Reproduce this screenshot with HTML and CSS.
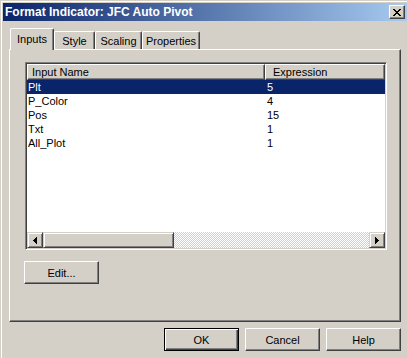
FILE: index.html
```html
<!DOCTYPE html>
<html lang="en">
  <head>
    <meta charset="UTF-8" />
    <meta name="viewport" content="width=device-width, initial-scale=1.0" />
    <title>Format Indicator: JFC Auto Pivot</title>
    <link rel="stylesheet" href="styles.css">
  </head>
  <body>
    <div class="window">
      <div class="titlebar">
        <span class="title">Format Indicator: JFC Auto Pivot</span>
        <div class="close-btn">
          <svg width="8" height="7" viewBox="0 0 8 7" shape-rendering="crispEdges">
            <path d="M0 0h2l2 2.5 2-2.5h2L5 3.5 8 7H6L4 4.5 2 7H0l3-3.5z" fill="#000" />
          </svg>
        </div>
      </div>
      <div class="content">
        <div class="tabs">
          <div class="tab active tab-inputs">Inputs</div>
          <div class="tab tab-style">Style</div>
          <div class="tab tab-scaling">Scaling</div>
          <div class="tab tab-properties">Properties</div>
        </div>
        <div class="panel">
          <div class="listbox">
            <div class="list-header">
              <div class="col col-name">Input Name</div>
              <div class="col col-expr">Expression</div>
            </div>
            <div class="rows">
              <div class="row selected"><span class="cell-name">Plt</span><span class="cell-expr">5</span></div>
              <div class="row"><span class="cell-name">P_Color</span><span class="cell-expr">4</span></div>
              <div class="row"><span class="cell-name">Pos</span><span class="cell-expr">15</span></div>
              <div class="row"><span class="cell-name">Txt</span><span class="cell-expr">1</span></div>
              <div class="row"><span class="cell-name">All_Plot</span><span class="cell-expr">1</span></div>
            </div>
            <div class="hscroll">
              <div class="sb-btn">
                <svg width="4" height="7" viewBox="0 0 4 7" shape-rendering="crispEdges">
                  <path d="M4 0v7L0 3.5z" fill="#000" />
                </svg>
              </div>
              <div class="sb-thumb"></div>
              <div class="sb-track"></div>
              <div class="sb-btn">
                <svg width="4" height="7" viewBox="0 0 4 7" shape-rendering="crispEdges">
                  <path d="M0 0v7l4-3.5z" fill="#000" />
                </svg>
              </div>
            </div>
          </div>
          <button class="btn btn-edit">Edit...</button>
        </div>
        <div class="actions">
          <button class="btn default">OK</button>
          <button class="btn">Cancel</button>
          <button class="btn">Help</button>
        </div>
      </div>
    </div>
  </body>
</html>
```

FILE: styles.css
```css
body {
  margin: 0;
  width: 407px;
  height: 358px;
  overflow: hidden;
  background-color: #d4d0c8;
  font-family: "Liberation Sans", Arial, sans-serif;
  font-size: 11px;
  color: #000000;
}
.window {
  margin: 1px 0 0 1px;
  border-top: 1px solid #ffffff;
  border-left: 1px solid #ffffff;
  width: 405px;
  height: 356px;
}

/* title bar */
.titlebar {
  box-sizing: border-box;
  margin: 1px 0 0 1px;
  width: 404px;
  height: 18px;
  padding: 0 2px;
  display: flex;
  align-items: center;
  justify-content: space-between;
  background: linear-gradient(to right, #0a246a, #a6caf0);
}
.title {
  color: #ffffff;
  font-weight: bold;
  font-size: 12px;
  white-space: nowrap;
}
.close-btn {
  box-sizing: border-box;
  width: 16px;
  height: 14px;
  display: flex;
  align-items: center;
  justify-content: center;
  background-color: #d4d0c8;
  border: 1px solid;
  border-color: #ffffff #404040 #404040 #ffffff;
  box-shadow: inset -1px -1px 0 #808080;
}

.content {
  padding-left: 7px;
}

/* tabs */
.tabs {
  margin-top: 7px;
  height: 21px;
  padding-left: 1px;
  display: flex;
  align-items: flex-end;
  position: relative;
  z-index: 1;
}
.tab {
  box-sizing: border-box;
  height: 18px;
  display: flex;
  align-items: center;
  justify-content: center;
  background-color: #d4d0c8;
  border-top: 1px solid #ffffff;
  border-left: 1px solid #ffffff;
  border-right: 1px solid #404040;
  border-radius: 2px 2px 0 0;
  box-shadow: inset -1px 0 0 #808080;
}
.tab.active {
  height: 22px;
  margin-bottom: -1px;
  padding-bottom: 2px;
}
.tab-inputs {
  width: 44px;
}
.tab-style {
  width: 41px;
}
.tab-scaling {
  width: 47px;
}
.tab-properties {
  width: 58px;
}

/* tab page */
.panel {
  box-sizing: border-box;
  width: 392px;
  height: 273px;
  padding: 12px 0 0 15px;
  display: flex;
  flex-direction: column;
  align-items: flex-start;
  border: 1px solid;
  border-color: #ffffff #404040 #404040 #ffffff;
  box-shadow: inset -1px -1px 0 #808080;
}
.listbox {
  box-sizing: border-box;
  width: 362px;
  height: 188px;
  padding: 1px;
  display: flex;
  flex-direction: column;
  background-color: #ffffff;
  border: 1px solid;
  border-color: #808080 #ffffff #ffffff #808080;
  box-shadow: inset 1px 1px 0 #404040, inset -1px -1px 0 #d4d0c8;
}
.list-header {
  display: flex;
  height: 16px;
}
.col {
  box-sizing: border-box;
  height: 16px;
  line-height: 14px;
  background-color: #d4d0c8;
  border: 1px solid;
  border-color: #ffffff #404040 #404040 #ffffff;
  box-shadow: inset -1px -1px 0 #808080;
}
.col-name {
  width: 238px;
  padding-left: 4px;
}
.col-expr {
  flex: 1;
  padding-left: 7px;
}
.rows {
  flex: 1;
}
.row {
  display: flex;
  height: 14px;
  line-height: 14px;
}
.row.selected {
  background-color: #0a246a;
  color: #ffffff;
}
.cell-name {
  width: 238px;
  padding-left: 1px;
  box-sizing: border-box;
}
.cell-expr {
  padding-left: 2px;
}

/* horizontal scrollbar */
.hscroll {
  display: flex;
  height: 16px;
}
.sb-btn,
.sb-thumb {
  box-sizing: border-box;
  height: 16px;
  background-color: #d4d0c8;
  border: 1px solid;
  border-color: #d4d0c8 #404040 #404040 #d4d0c8;
  box-shadow: inset 1px 1px 0 #ffffff, inset -1px -1px 0 #808080;
}
.sb-btn {
  width: 16px;
  display: flex;
  align-items: center;
  justify-content: center;
}
.sb-thumb {
  width: 131px;
}
.sb-track {
  flex: 1;
  background: repeating-conic-gradient(#d4d0c8 0 25%, #ffffff 0 50%) 0 0 / 2px 2px;
}

/* buttons */
.btn {
  box-sizing: border-box;
  width: 75px;
  height: 23px;
  padding: 0;
  background-color: #d4d0c8;
  border: 1px solid;
  border-color: #ffffff #404040 #404040 #ffffff;
  box-shadow: inset -1px -1px 0 #808080;
  font-family: inherit;
  font-size: 11px;
  color: #000000;
}
.btn.default {
  border: 1px solid #000000;
  box-shadow: inset 1px 1px 0 #ffffff, inset -1px -1px 0 #404040, inset -2px -2px 0 #808080;
}
.btn-edit {
  margin: 11px 0 0 -1px;
}
.actions {
  width: 392px;
  margin-top: 6px;
  display: flex;
  justify-content: flex-end;
  gap: 6px;
}
```
